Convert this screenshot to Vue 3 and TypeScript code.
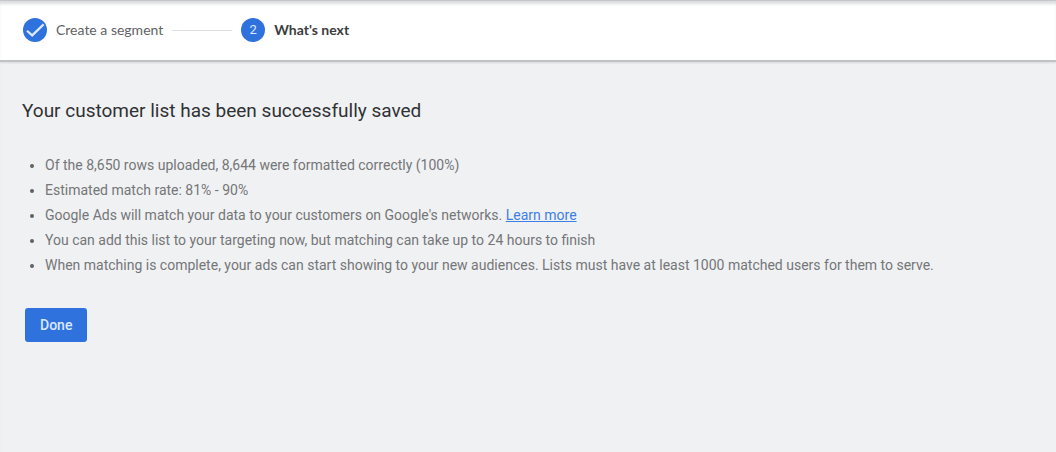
<script setup lang="ts">
const notes: string[] = [
  'Of the 8,650 rows uploaded, 8,644 were formatted correctly (100%)',
  'Estimated match rate: 81% - 90%',
  "Google Ads will match your data to your customers on Google's networks.",
  'You can add this list to your targeting now, but matching can take up to 24 hours to finish',
  'When matching is complete, your ads can start showing to your new audiences. Lists must have at least 1000 matched users for them to serve.',
]
const linkedNote = 2
</script>

<template>
  <div class="page">
    <header class="stepper-bar">
      <ol class="stepper">
        <li class="step">
          <svg class="badge" viewBox="0 0 24 24" aria-hidden="true">
            <circle cx="12" cy="12" r="12" fill="#2f72de" />
            <path d="M4 12.8 9.2 17.4 20.6 6.4" fill="none" stroke="#dce9ff" stroke-width="2.2" />
          </svg>
          <span class="label">Create a segment</span>
        </li>
        <li class="connector" aria-hidden="true"></li>
        <li class="step" aria-current="step">
          <span class="badge number">2</span>
          <span class="label current">What's next</span>
        </li>
      </ol>
    </header>
    <main class="content">
      <h1>Your customer list has been successfully saved</h1>
      <ul class="notes">
        <li v-for="(note, i) in notes" :key="i">
          {{ note }}
          <a v-if="i === linkedNote" href="#">Learn more</a>
        </li>
      </ul>
      <button class="done" type="button">Done</button>
    </main>
  </div>
</template>

<style>
body {
  background: #f0f1f3;
}
</style>

<style scoped>
.page {
  box-sizing: border-box;
  min-height: 100vh;
  border-left: 1px solid #e8f0f8;
  background: #f0f1f3;
  color: #747678;
  font-family: Roboto, "Liberation Sans", sans-serif;
  font-size: 14px;
}
.stepper-bar {
  margin-left: -1px;
  padding: 15px 23px 16px;
  border-top: 1px solid #c5c6c8;
  border-bottom: 2px solid #c1c2c4;
  background: #fff;
  box-shadow: inset 0 4px 3px -1px #dcdde0, 0 1px 2px #d8d9dc;
}
.stepper {
  display: flex;
  align-items: center;
  margin: 0;
  padding: 0;
  list-style: none;
}
.step {
  display: flex;
  align-items: center;
  gap: 9px;
  height: 28px;
}
.badge {
  flex: none;
  width: 24px;
  height: 24px;
}
.number {
  border-radius: 50%;
  background: #2f72de;
  color: #dce9ff;
  font-size: 13px;
  line-height: 24px;
  text-align: center;
}
.label {
  color: #606265;
  font-family: Lato, Roboto, sans-serif;
  font-size: 14px;
  line-height: 20px;
}
.label.current {
  color: #3b3c3e;
  font-weight: 700;
}
.connector {
  width: 60px;
  margin: 0 9px;
  border-top: 1px solid #dedfe1;
}
.content {
  padding: 36px 21px;
}
h1 {
  margin: 0 0 29px;
  color: #303134;
  font-size: 19px;
  font-weight: 400;
  line-height: 26px;
}
.notes {
  margin: 0 0 30px;
  padding-left: 23px;
  line-height: 25px;
}
.notes li::marker {
  color: #5f6164;
}
a {
  color: #3d7fe6;
  text-decoration: underline;
}
.done {
  height: 34px;
  margin-left: 3px;
  padding: 0 15px;
  border: 0;
  border-radius: 3px;
  background: #2f72de;
  color: #dce9ff;
  font: 500 14px/34px Roboto, "Liberation Sans", sans-serif;
}
</style>
